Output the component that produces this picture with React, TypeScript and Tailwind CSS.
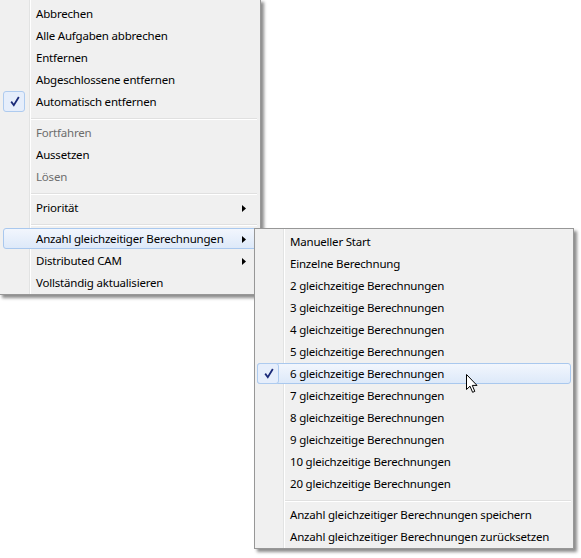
import type { ReactNode } from 'react'

type Entry =
  | 'sep'
  | { label: string; checked?: boolean; disabled?: boolean; sub?: boolean; active?: boolean }

const MAIN_ITEMS: Entry[] = [
  { label: 'Abbrechen' },
  { label: 'Alle Aufgaben abbrechen' },
  { label: 'Entfernen' },
  { label: 'Abgeschlossene entfernen' },
  { label: 'Automatisch entfernen', checked: true },
  'sep',
  { label: 'Fortfahren', disabled: true },
  { label: 'Aussetzen' },
  { label: 'Lösen', disabled: true },
  'sep',
  { label: 'Priorität', sub: true },
  'sep',
  { label: 'Anzahl gleichzeitiger Berechnungen', sub: true, active: true },
  { label: 'Distributed CAM', sub: true },
  { label: 'Vollständig aktualisieren' },
]

const SUB_ITEMS: Entry[] = [
  { label: 'Manueller Start' },
  { label: 'Einzelne Berechnung' },
  { label: '2 gleichzeitige Berechnungen' },
  { label: '3 gleichzeitige Berechnungen' },
  { label: '4 gleichzeitige Berechnungen' },
  { label: '5 gleichzeitige Berechnungen' },
  { label: '6 gleichzeitige Berechnungen', checked: true, active: true },
  { label: '7 gleichzeitige Berechnungen' },
  { label: '8 gleichzeitige Berechnungen' },
  { label: '9 gleichzeitige Berechnungen' },
  { label: '10 gleichzeitige Berechnungen' },
  { label: '20 gleichzeitige Berechnungen' },
  'sep',
  { label: 'Anzahl gleichzeitiger Berechnungen speichern' },
  { label: 'Anzahl gleichzeitiger Berechnungen zurücksetzen' },
]

function Check() {
  return (
    <svg width="10" height="11" viewBox="0 0 10 11" className="ml-[2px]">
      <path d="M1.2 5.6 L3.8 9.2 L8.8 1" fill="none" stroke="#1b2a78" strokeWidth="1.8" strokeLinejoin="miter" />
    </svg>
  )
}

function Arrow() {
  return (
    <svg width="4" height="7" viewBox="0 0 4 7">
      <path d="M0 0 L4 3.5 L0 7 Z" fill="#000" />
    </svg>
  )
}

function Row({ entry }: { entry: Exclude<Entry, 'sep'> }) {
  return (
    <div className="relative h-[22px] flex items-center">
      {entry.active && (
        <div className="absolute inset-x-0 top-0 h-[21px] rounded-[3px] border border-[#a9c8ee] bg-gradient-to-b from-[#f2f6fd] to-[#dde9f9]" />
      )}
      <div className="relative w-[22px] h-[21px] self-start flex items-center justify-center">
        {entry.checked && (
          <div className="absolute inset-0 rounded-[3px] border border-[#aecbef] bg-[#e6eefb]" />
        )}
        {entry.checked && <span className="relative flex"><Check /></span>}
      </div>
      <span
        className={
          'relative ml-[11px] whitespace-nowrap tracking-[-0.2px] ' +
          (entry.disabled ? 'text-[#6d6d6d]' : 'text-black')
        }
      >
        {entry.label}
      </span>
      {entry.sub && (
        <span className="relative ml-auto mr-[11px] flex">
          <Arrow />
        </span>
      )}
    </div>
  )
}

function Separator() {
  return (
    <div className="h-[9px] pt-[5px] pl-[28px]">
      <div className="border-t border-b border-t-[#e0e0e0] border-b-white" />
    </div>
  )
}

function Menu({ items, gutterLeft, className }: { items: Entry[]; gutterLeft: string; className: string }): ReactNode {
  return (
    <div className={'border border-[#979797] bg-[#f0f0f0] shadow-[3px_3px_3px_rgba(0,0,0,0.45)] ' + className}>
      <div className={'absolute top-0 bottom-0 w-[2px] border-l border-l-[#e2e3e3] border-r border-r-white ' + gutterLeft} />
      {items.map((entry, i) =>
        entry === 'sep' ? <Separator key={i} /> : <Row key={i} entry={entry} />
      )}
    </div>
  )
}

function Cursor() {
  return (
    <svg width="13" height="20" viewBox="0 0 13 20" className="absolute left-[466px] top-[374px]">
      <path
        d="M0.5 0.5 L0.5 15.5 L4 12.2 L6.6 18.3 L8.8 17.4 L6.3 11.4 L11 11.4 Z"
        fill="#fff"
        stroke="#000"
        strokeWidth="1"
        strokeLinejoin="miter"
      />
    </svg>
  )
}

export default function App() {
  return (
    <div
      className="relative w-[581px] h-[558px] overflow-hidden bg-white text-[11.5px] leading-none"
      style={{ fontFamily: '"Noto Sans", "Open Sans", sans-serif' }}
    >
      <Menu
        items={MAIN_ITEMS}
        gutterLeft="left-[29px]"
        className="relative -ml-px -mt-px w-[262px] pt-[3px] pb-0 px-[3px]"
      />
      <Menu
        items={SUB_ITEMS}
        gutterLeft="left-[28px]"
        className="absolute left-[254px] top-[228px] w-[320px] pt-[2px] pb-0 pl-[2px] pr-[2px]"
      />
      <Cursor />
    </div>
  )
}
